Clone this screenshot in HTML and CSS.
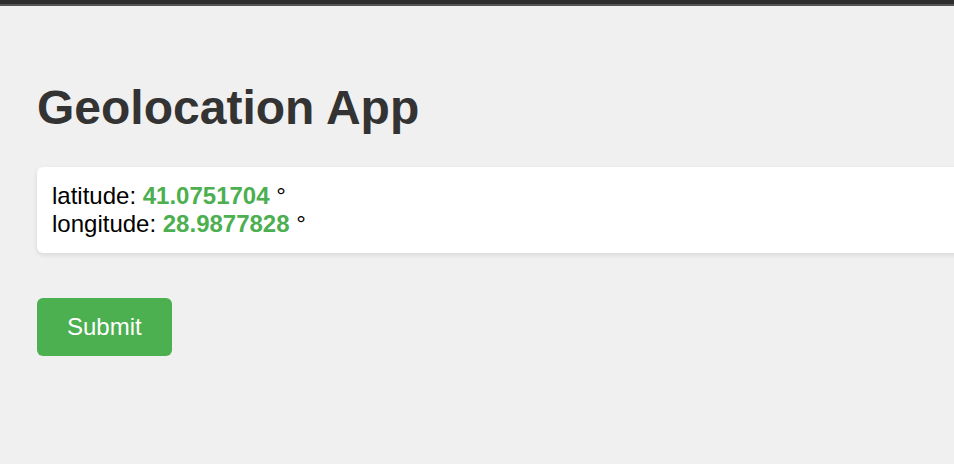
FILE: index.html
```html
<!DOCTYPE html>
<html lang="en">
<head>
<meta charset="utf-8">
<title>Geolocation App</title>
<link rel="stylesheet" href="styles.css">
</head>
<body>
<div class="topbar"></div>
<main class="app">
  <h1 class="title">Geolocation App</h1>
  <div class="card">
    <div class="row">latitude: <span class="value">41.0751704</span> °</div>
    <div class="row">longitude: <span class="value">28.9877828</span> °</div>
  </div>
  <button class="submit" type="button">Submit</button>
</main>
</body>
</html>
```

FILE: styles.css
```css
html, body {
  margin: 0;
  padding: 0;
}
body {
  background: #f0f0f0;
  font-family: "Liberation Sans", Arial, sans-serif;
  font-size: 24px;
  color: #000;
  overflow: hidden;
  height: 464px;
}
.topbar {
  height: 4px;
  background: #2d2d2d;
  border-bottom: 2px solid #555;
}
.app {
  padding: 42px 0 0 37px;
  display: flex;
  flex-direction: column;
  align-items: flex-start;
}
.title {
  margin: 32px 0;
  font-size: 48px;
  font-weight: bold;
  color: #333;
  line-height: normal;
}
.card {
  align-self: stretch;
  margin-right: -20px;
  background: #fff;
  border-radius: 6px;
  padding: 15px;
  box-shadow: 0 2px 5px rgba(0, 0, 0, 0.1);
}
.row {
  line-height: normal;
}
.value {
  color: #4caf50;
  font-weight: bold;
}
.submit {
  margin-top: 45px;
  background: #4caf50;
  color: #fff;
  border: none;
  border-radius: 6px;
  padding: 15px 30px;
  font-family: "Liberation Sans", Arial, sans-serif;
  font-size: 24px;
  line-height: normal;
  cursor: pointer;
}
```
